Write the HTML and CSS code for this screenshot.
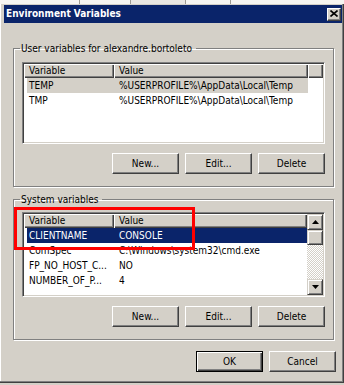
FILE: index.html
```html
<!DOCTYPE html>
<html>
<head>
<meta charset="utf-8">
<link rel="stylesheet" href="styles.css">
</head>
<body>
<div class="strip">
  <span class="tab tab-a"></span><span class="tab tab-b"></span><span class="tab tab-c"></span><span class="tab tab-d"></span>
</div>
<div class="window">
  <div class="titlebar">
    <span class="title">Environment Variables</span>
    <span class="close">
      <svg width="8" height="7" viewBox="0 0 8 7"><path d="M0.5 0.5 L7.5 6.5 M7.5 0.5 L0.5 6.5" stroke="#000" stroke-width="1.6" fill="none"/></svg>
    </span>
  </div>
  <div class="content">
    <fieldset class="group group-user">
      <legend>User variables for alexandre.bortoleto</legend>
      <div class="listview lv-user">
        <div class="lv-main">
          <div class="lv-header">
            <div class="hcell hc1">Variable</div>
            <div class="hcell hc2">Value</div>
            <div class="hcell hfill"></div>
          </div>
          <div class="lv-row sel-inactive"><span class="cell c1">TEMP</span><span class="cell c2">%USERPROFILE%\AppData\Local\Temp</span></div>
          <div class="lv-row"><span class="cell c1">TMP</span><span class="cell c2">%USERPROFILE%\AppData\Local\Temp</span></div>
        </div>
      </div>
      <div class="btnrow">
        <span class="btn">New...</span>
        <span class="btn">Edit...</span>
        <span class="btn">Delete</span>
      </div>
    </fieldset>

    <fieldset class="group group-sys">
      <legend>System variables</legend>
      <div class="listview lv-sys">
        <div class="lv-main">
          <div class="lv-header">
            <div class="hcell hc1">Variable</div>
            <div class="hcell hc2 narrow">Value</div>
          </div>
          <div class="lv-row sel-active"><span class="cell c1">CLIENTNAME</span><span class="cell c2 narrow">CONSOLE</span></div>
          <div class="lv-row"><span class="cell c1">ComSpec</span><span class="cell c2 narrow">C:\Windows\system32\cmd.exe</span></div>
          <div class="lv-row"><span class="cell c1">FP_NO_HOST_C...</span><span class="cell c2 narrow">NO</span></div>
          <div class="lv-row"><span class="cell c1">NUMBER_OF_P...</span><span class="cell c2 narrow">4</span></div>
        </div>
        <div class="vscroll">
          <span class="sb-btn"><svg width="7" height="4" viewBox="0 0 7 4"><path d="M3.5 0 L7 4 L0 4 Z" fill="#000"/></svg></span>
          <span class="sb-thumb"></span>
          <span class="sb-track"></span>
          <span class="sb-btn"><svg width="7" height="4" viewBox="0 0 7 4"><path d="M0 0 L7 0 L3.5 4 Z" fill="#000"/></svg></span>
        </div>
      </div>
      <div class="btnrow">
        <span class="btn">New...</span>
        <span class="btn">Edit...</span>
        <span class="btn">Delete</span>
      </div>
    </fieldset>

    <div class="footer">
      <span class="btn btn-default">OK</span>
      <span class="btn">Cancel</span>
    </div>
  </div>
</div>
<div class="annotation"></div>
</body>
</html>
```

FILE: styles.css
```css
html, body {
  margin: 0;
  padding: 0;
}
body {
  width: 344px;
  height: 385px;
  overflow: hidden;
  position: relative;
  background: #d4d0c8;
  font-family: "DejaVu Sans Condensed", "DejaVu Sans", sans-serif;
  font-stretch: condensed;
  font-size: 10px;
  color: #000;
}

/* strip of tabs behind the dialog */
.strip {
  height: 4px;
  display: flex;
  background: #f6f5f2;
}
.tab {
  height: 4px;
  border-right: 1px solid #9d9a93;
  box-sizing: border-box;
}
.tab-a { width: 80px; }
.tab-b { width: 51px; }
.tab-c { width: 55px; background: #e9e7e2; }
.tab-d { width: 45px; }

/* window frame */
.window {
  width: 344px;
  box-sizing: border-box;
  background: #d4d0c8;
  padding: 1px 2px 4px 4px;
  box-shadow: inset -1px -1px 0 #404040, inset -2px -2px 0 #808080, inset 1px 0 0 #ffffff;
}

.titlebar {
  height: 18px;
  background: #0a246a;
  display: flex;
  align-items: center;
  justify-content: space-between;
  padding: 0 1px 0 2px;
}
.title {
  color: #fff;
  font-weight: bold;
  font-size: 10px;
  line-height: 18px;
  white-space: nowrap;
}
.close {
  width: 14px;
  height: 13px;
  box-sizing: border-box;
  background: #d4d0c8;
  border: 1px solid;
  border-color: #ffffff #404040 #404040 #ffffff;
  box-shadow: inset -1px -1px 0 #808080;
  display: flex;
  align-items: center;
  justify-content: center;
}
.close svg { display: block; margin: 0 1px 1px 0; }

.content {
  padding: 0 6px 7px 9px;
}

/* group boxes */
.group {
  width: 321px;
  min-width: 0;
  box-sizing: border-box;
  margin: 0;
  border: 1px solid #808080;
  box-shadow: 1px 1px 0 #ffffff, inset 1px 1px 0 #ffffff;
  padding: 7px 8px 12px 8px;
}
.group legend {
  font-size: 10px;
  line-height: 13px;
  padding: 0 4px 0 1px;
  margin-left: -2px;
  white-space: nowrap;
}
.group-user { margin-top: 19px; }
.group-sys { margin-top: 6px; padding-top: 6px; }

/* list views */
.listview {
  width: 303px;
  box-sizing: border-box;
  background: #fff;
  border: 1px solid;
  border-color: #808080 #ffffff #ffffff #808080;
  box-shadow: inset 1px 1px 0 #404040, inset -1px -1px 0 #d4d0c8;
  padding: 1px;
  display: flex;
  overflow: hidden;
}
.lv-user { height: 82px; }
.lv-sys { height: 85px; }
.lv-main {
  flex: 1;
  min-width: 0;
  overflow: hidden;
}
.lv-header {
  display: flex;
  height: 14px;
}
.hcell {
  box-sizing: border-box;
  height: 14px;
  line-height: 13px;
  padding-left: 5px;
  background: #d4d0c8;
  box-shadow: inset 1px 1px 0 #ffffff, inset -1px -1px 0 #404040, inset -2px -2px 0 #808080;
  white-space: nowrap;
  overflow: hidden;
}
.hc1 { width: 90px; }
.hc2 { width: 194px; }
.hc2.narrow { width: 193px; }
.hfill { flex: 1; }

.lv-row {
  display: flex;
  height: 15px;
  line-height: 15px;
  margin-left: 3px;
  width: max-content;
}
.cell {
  box-sizing: border-box;
  white-space: nowrap;
  overflow: hidden;
}
.c1 { width: 87px; padding-left: 2px; }
.c2 { width: 194px; padding-left: 5px; }
.c2.narrow { width: 193px; }
.sel-inactive { background: #d4d0c8; }
.sel-active { background: #0a246a; color: #fff; }

/* scrollbar */
.vscroll {
  width: 16px;
  display: flex;
  flex-direction: column;
}
.sb-btn, .sb-thumb {
  box-sizing: border-box;
  width: 16px;
  background: #d4d0c8;
  border: 1px solid;
  border-color: #d4d0c8 #404040 #404040 #d4d0c8;
  box-shadow: inset 1px 1px 0 #ffffff, inset -1px -1px 0 #808080;
}
.sb-btn {
  height: 16px;
  display: flex;
  align-items: center;
  justify-content: center;
}
.sb-btn svg { display: block; }
.sb-thumb { height: 15px; }
.sb-track {
  flex: 1;
  background-color: #ffffff;
  background-image: conic-gradient(#d4d0c8 25%, #ffffff 0 50%, #d4d0c8 0 75%, #ffffff 0);
  background-size: 2px 2px;
}

/* buttons */
.btnrow {
  display: flex;
  justify-content: flex-end;
  gap: 6px;
  margin-top: 9px;
}
.btn {
  width: 67px;
  height: 21px;
  box-sizing: border-box;
  background: #d4d0c8;
  border: 1px solid;
  border-color: #ffffff #404040 #404040 #ffffff;
  box-shadow: inset -1px -1px 0 #808080;
  display: flex;
  align-items: center;
  justify-content: center;
  font-size: 10px;
  line-height: 12px;
}
.btn-default {
  border-color: #000;
  box-shadow: inset 1px 1px 0 #ffffff, inset -1px -1px 0 #404040, inset -2px -2px 0 #808080;
}
.footer {
  display: flex;
  justify-content: flex-end;
  gap: 6px;
  margin-top: 11px;
}

/* red annotation box drawn over the screenshot */
.annotation {
  position: absolute;
  left: 14px;
  top: 207px;
  width: 181px;
  height: 43px;
  box-sizing: border-box;
  border: 3px solid #ff0000;
}
```
